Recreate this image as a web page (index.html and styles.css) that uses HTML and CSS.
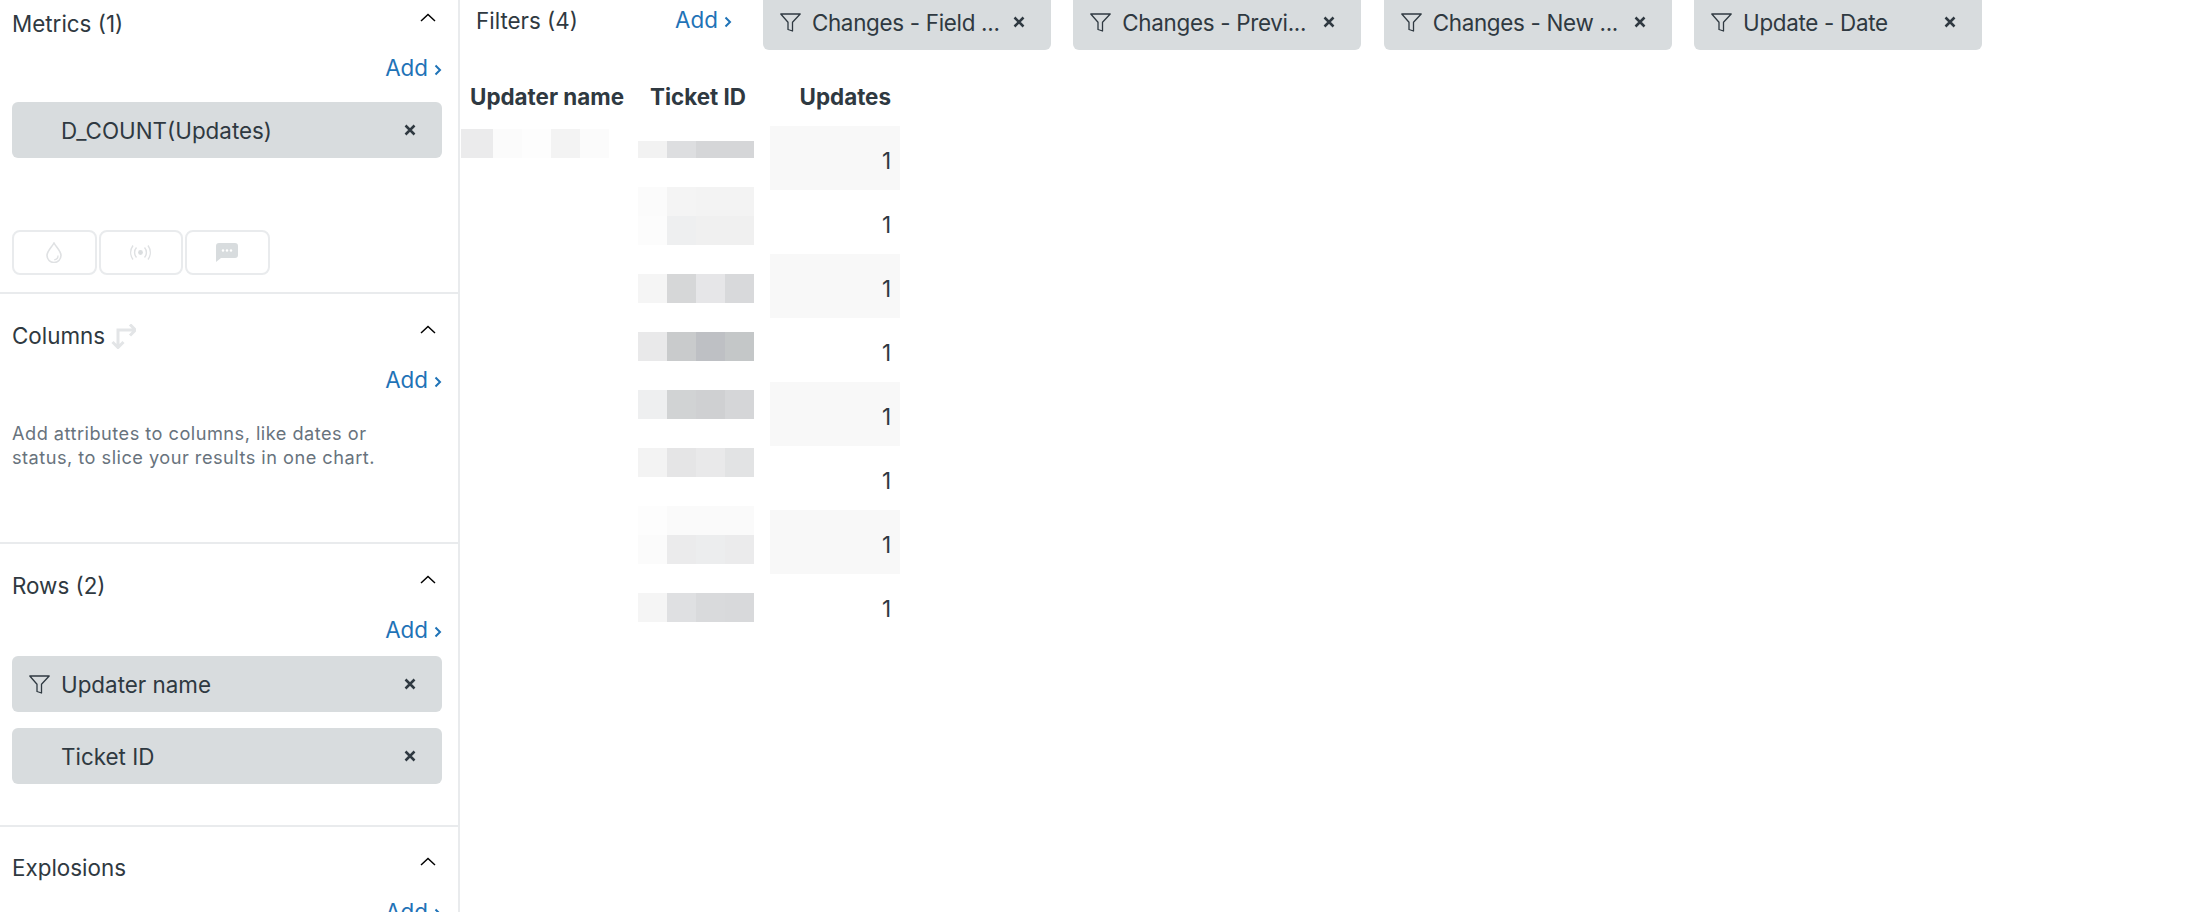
FILE: index.html
```html
<!DOCTYPE html>
<html lang="en">
<head>
<meta charset="utf-8">
<title>Report builder</title>
<link rel="stylesheet" href="styles.css">
</head>
<body>
<svg class="defs" width="0" height="0" aria-hidden="true">
  <symbol id="chev-up" viewBox="0 0 16 16"><path d="M1 9 8 2.500 15 9" fill="none" stroke="#000" stroke-width="1.5"/></symbol>
  <symbol id="chev-right" viewBox="0 0 8 12"><path d="M1.5 1.5 6 6l-4.500 4.500" fill="none" stroke="#1f73b7" stroke-width="2"/></symbol>
  <symbol id="close" viewBox="0 0 12 12"><path d="M1.500 1.500l9 9m0-9l-9 9" fill="none" stroke="#2f3941" stroke-width="2.500"/></symbol>
  <symbol id="funnel" viewBox="0 0 21 19"><path d="M.8 1h19.400l-7.700 8.300v8.700l-4.500-1.500V9.300z" fill="none" stroke="#2f3941" stroke-width="1.300" stroke-linejoin="round"/></symbol>
</svg>
<div class="app">
  <aside class="sidebar">
    <section class="sec sec-metrics">
      <header class="sec-head"><span class="sec-title">Metrics (1)</span><svg class="chev"><use href="#chev-up"/></svg></header>
      <div class="add-row"><a class="add">Add<svg class="add-chev"><use href="#chev-right"/></svg></a></div>
      <div class="pills pills-wide">
        <div class="pill"><span class="pill-icon"></span><span class="pill-text">D_COUNT(Updates)</span><svg class="pill-x"><use href="#close"/></svg></div>
      </div>
      <div class="tools">
        <button class="tool" type="button">
          <svg width="16" height="21" viewBox="0 0 16 21" fill="none" stroke="#dfe1e3" stroke-width="1.600"><path d="M8 1C6 5 1 9 1 13.500a7 7 0 0 0 14 0C15 9 10 5 8 1z"/><path d="M12 13.500a4.200 4.200 0 0 1-3.800 4.300" stroke-width="1.300"/></svg>
        </button>
        <button class="tool" type="button">
          <svg width="23" height="15" viewBox="0 0 23 15" fill="none" stroke="#dfe1e3" stroke-width="1.400"><circle cx="11.500" cy="7.500" r="2.400" fill="#dadddf" stroke="none"/><path d="M7.500 2.500a7.500 7.500 0 0 0 0 10M15.500 2.500a7.500 7.500 0 0 1 0 10M4 .5a12 12 0 0 0 0 14M19 .5a12 12 0 0 1 0 14"/></svg>
        </button>
        <button class="tool" type="button">
          <svg width="22" height="19" viewBox="0 0 22 19"><path d="M3 0h16a3 3 0 0 1 3 3v9a3 3 0 0 1-3 3H5l-5 4V3a3 3 0 0 1 3-3z" fill="#d8dcde"/><circle cx="7" cy="7.500" r="1.200" fill="#fff"/><circle cx="11" cy="7.500" r="1.200" fill="#fff"/><circle cx="15" cy="7.500" r="1.200" fill="#fff"/></svg>
        </button>
      </div>
    </section>
    <section class="sec sec-columns">
      <header class="sec-head"><span class="sec-title">Columns<svg class="swap" viewBox="0 0 25 25" fill="none" stroke="#e3e5e7" stroke-width="3"><path d="M7 23V6h17M19 .5 24.500 6 19 11.500M1.500 18 7 23.500 12.500 18"/></svg></span><svg class="chev"><use href="#chev-up"/></svg></header>
      <div class="add-row"><a class="add">Add<svg class="add-chev"><use href="#chev-right"/></svg></a></div>
      <p class="help">Add attributes to columns, like dates or<br>status, to slice your results in one chart.</p>
    </section>
    <section class="sec sec-rows">
      <header class="sec-head"><span class="sec-title">Rows (2)</span><svg class="chev"><use href="#chev-up"/></svg></header>
      <div class="add-row"><a class="add">Add<svg class="add-chev"><use href="#chev-right"/></svg></a></div>
      <div class="pills">
        <div class="pill"><span class="pill-icon"><svg class="funnel"><use href="#funnel"/></svg></span><span class="pill-text">Updater name</span><svg class="pill-x"><use href="#close"/></svg></div>
        <div class="pill"><span class="pill-icon"></span><span class="pill-text">Ticket ID</span><svg class="pill-x"><use href="#close"/></svg></div>
      </div>
    </section>
    <section class="sec sec-explosions">
      <header class="sec-head"><span class="sec-title">Explosions</span><svg class="chev"><use href="#chev-up"/></svg></header>
      <div class="add-row"><a class="add">Add<svg class="add-chev"><use href="#chev-right"/></svg></a></div>
    </section>
  </aside>
  <main class="main">
    <div class="filters">
      <span class="filters-label">Filters (4)</span>
      <a class="add filters-add">Add<svg class="add-chev"><use href="#chev-right"/></svg></a>
      <div class="filter-pills">
        <div class="pill filter-pill"><span class="pill-icon"><svg class="funnel"><use href="#funnel"/></svg></span><span class="pill-text">Changes - Field ...</span><svg class="pill-x"><use href="#close"/></svg></div>
        <div class="pill filter-pill"><span class="pill-icon"><svg class="funnel"><use href="#funnel"/></svg></span><span class="pill-text">Changes - Previ...</span><svg class="pill-x"><use href="#close"/></svg></div>
        <div class="pill filter-pill"><span class="pill-icon"><svg class="funnel"><use href="#funnel"/></svg></span><span class="pill-text">Changes - New ...</span><svg class="pill-x"><use href="#close"/></svg></div>
        <div class="pill filter-pill"><span class="pill-icon"><svg class="funnel"><use href="#funnel"/></svg></span><span class="pill-text">Update - Date</span><svg class="pill-x"><use href="#close"/></svg></div>
      </div>
    </div>
    <div class="table">
      <div class="th th-name">Updater name</div><div class="th th-ticket">Ticket ID</div><div class="th th-num">Updates</div>
      <div class="td"></div><div class="td"></div><div class="td num">1</div>
      <div class="td"></div><div class="td"></div><div class="td num">1</div>
      <div class="td"></div><div class="td"></div><div class="td num">1</div>
      <div class="td"></div><div class="td"></div><div class="td num">1</div>
      <div class="td"></div><div class="td"></div><div class="td num">1</div>
      <div class="td"></div><div class="td"></div><div class="td num">1</div>
      <div class="td"></div><div class="td"></div><div class="td num">1</div>
      <div class="td"></div><div class="td"></div><div class="td num">1</div>
      <div class="mosaic" aria-hidden="true">
        <div class="mrow"><i class="wide g-eb"></i><i class="g-fb"></i><i class="g-fd"></i><i class="g-f3"></i><i class="g-fb"></i><i></i><i class="low g-f2"></i><i class="low g-dd"></i><i class="low g-d5"></i><i class="low g-d5"></i></div>
        <div class="mrow"></div>
        <div class="mrow"><i></i><i></i><i></i><i></i><i></i><i></i><i class="g-fb"></i><i class="g-f4"></i><i class="g-f3"></i><i class="g-f3"></i></div>
        <div class="mrow"><i></i><i></i><i></i><i></i><i></i><i></i><i class="g-fc"></i><i class="g-ee"></i><i class="g-f0"></i><i class="g-f0"></i></div>
        <div class="mrow"></div>
        <div class="mrow"><i></i><i></i><i></i><i></i><i></i><i></i><i class="g-f5"></i><i class="g-d6"></i><i class="g-e6"></i><i class="g-d8"></i></div>
        <div class="mrow"></div>
        <div class="mrow"><i></i><i></i><i></i><i></i><i></i><i></i><i class="g-e9"></i><i class="g-c9"></i><i class="g-be"></i><i class="g-c4"></i></div>
        <div class="mrow"></div>
        <div class="mrow"><i></i><i></i><i></i><i></i><i></i><i></i><i class="g-ee"></i><i class="g-d1"></i><i class="g-cf"></i><i class="g-d5"></i></div>
        <div class="mrow"></div>
        <div class="mrow"><i></i><i></i><i></i><i></i><i></i><i></i><i class="g-f3"></i><i class="g-e5"></i><i class="g-e9"></i><i class="g-e2"></i></div>
        <div class="mrow"></div>
        <div class="mrow"><i></i><i></i><i></i><i></i><i></i><i></i><i class="g-fd"></i><i class="g-fa"></i><i class="g-fa"></i><i class="g-fa"></i></div>
        <div class="mrow"><i></i><i></i><i></i><i></i><i></i><i></i><i class="g-fb"></i><i class="g-eb"></i><i class="g-ec"></i><i class="g-eb"></i></div>
        <div class="mrow"></div>
        <div class="mrow"><i></i><i></i><i></i><i></i><i></i><i></i><i class="g-f5"></i><i class="g-df"></i><i class="g-d9"></i><i class="g-d8"></i></div>
      </div>
    </div>
  </main>
</div>
</body>
</html>
```
FILE: styles.css
```css
* { box-sizing: border-box; }
html, body { margin: 0; height: 100%; background: #fff; }
body {
  font-family: Inter, "Noto Sans", "Liberation Sans", sans-serif;
  font-size: 22.4px;
  color: #2f3941;
  overflow: hidden;
}
.defs { position: absolute; }
.app { display: flex; height: 912px; overflow: hidden; }

.sidebar { width: 460px; flex: none; border-right: 2px solid #e9ebed; }
.sec { padding: 28px 16px 0 12px; border-bottom: 2px solid #e9ebed; }
.sec-metrics { padding-top: 10px; height: 294px; }
.sec-columns { height: 250px; }
.sec-rows { height: 283px; }
.sec-explosions { padding-top: 27px; border-bottom: 0; }

.sec-head { display: flex; justify-content: space-between; align-items: flex-start; height: 28px; line-height: 28px; }
.sec-title { display: flex; align-items: center; gap: 6px; }
.swap { width: 25px; height: 25px; flex: none; }
.chev { width: 16px; height: 16px; margin: 2px 6px 0 0; }

.add-row { display: flex; justify-content: flex-end; margin-top: 16px; }
.add { display: inline-flex; align-items: center; gap: 6px; height: 28px; line-height: 28px; color: #1f73b7; }
.add-chev { width: 8px; height: 12px; margin-top: 3px; }

.pills { display: flex; flex-direction: column; gap: 16px; margin-top: 12px; }
.pills-wide { margin-top: 20px; }
.pill {
  display: flex; align-items: center;
  height: 56px; padding: 0 26px 0 17px;
  background: #d8dcde; border-radius: 6px;
}
.pill-icon { display: flex; width: 32px; flex: none; }
.funnel { width: 21px; height: 19px; }
.pill-text { flex: 1; white-space: nowrap; }
.pill-x { width: 12px; height: 12px; flex: none; }

.tools { display: flex; gap: 2px; margin-top: 72px; }
.tool {
  display: flex; align-items: center; justify-content: center;
  width: 84.500px; height: 45px; padding: 0;
  background: #fff; border: 2px solid #e9ebed; border-radius: 8px;
}
.help { margin: 27px 0 0; font-size: 18.200px; letter-spacing: .48px; line-height: 24px; color: #68737d; white-space: nowrap; }

.main { flex: 1; min-width: 0; }
.filters { display: flex; align-items: center; height: 50px; padding-left: 16px; }
.filters-label { width: 199px; flex: none; margin-top: -10px; }
.filters-add { flex: none; margin-top: -10px; }
.filter-pills { display: flex; gap: 22.400px; margin-left: 31px; margin-top: -6px; }
.filter-pill { width: 288px; letter-spacing: -.3px; }

.table {
  position: relative;
  display: grid;
  grid-template-columns: 172px 136px 130px;
  grid-template-rows: 60px;
  grid-auto-rows: 64px;
  width: 438px;
  margin: 16px 0 0 2px;
}
.th { display: flex; align-items: center; font-weight: 700; white-space: nowrap; }
.th-name { padding-left: 8px; }
.th-ticket { padding-left: 16px; }
.th-num { justify-content: flex-end; padding-right: 9px; }
.num { display: flex; align-items: center; justify-content: flex-end; padding: 4px 9px 0 0; }
.num:nth-child(6n + 6) { background: #f8f8f8; }

.mosaic { position: absolute; left: 2px; top: 63px; }
.mrow { display: flex; height: 29px; }
.mrow i { display: block; width: 29px; height: 29px; flex: none; }
.mrow i.wide { width: 32px; margin-left: -3px; }
.mrow i.low { height: 17px; margin-top: 12px; }

.g-be { background: #bec0c4; } .g-c4 { background: #c4c7c8; } .g-c9 { background: #c9cbcc; }
.g-cf { background: #cfd0d2; } .g-d1 { background: #d1d3d4; } .g-d5 { background: #d5d6d8; }
.g-d6 { background: #d6d7d8; } .g-d8 { background: #d8d9db; } .g-d9 { background: #d9dadc; }
.g-dd { background: #dddee0; } .g-df { background: #dfe0e2; } .g-e2 { background: #e2e3e4; }
.g-e5 { background: #e5e5e6; } .g-e6 { background: #e6e6e8; } .g-e9 { background: #e9e9ea; }
.g-eb { background: #ebebec; } .g-ec { background: #ecedee; } .g-ee { background: #eeeff0; }
.g-f0 { background: #f0f0f0; } .g-f2 { background: #f2f2f2; } .g-f3 { background: #f3f3f3; }
.g-f4 { background: #f4f4f4; } .g-f5 { background: #f5f5f5; } .g-fa { background: #fafafa; }
.g-fb { background: #fbfbfb; } .g-fc { background: #fcfcfc; } .g-fd { background: #fdfdfd; }
```
